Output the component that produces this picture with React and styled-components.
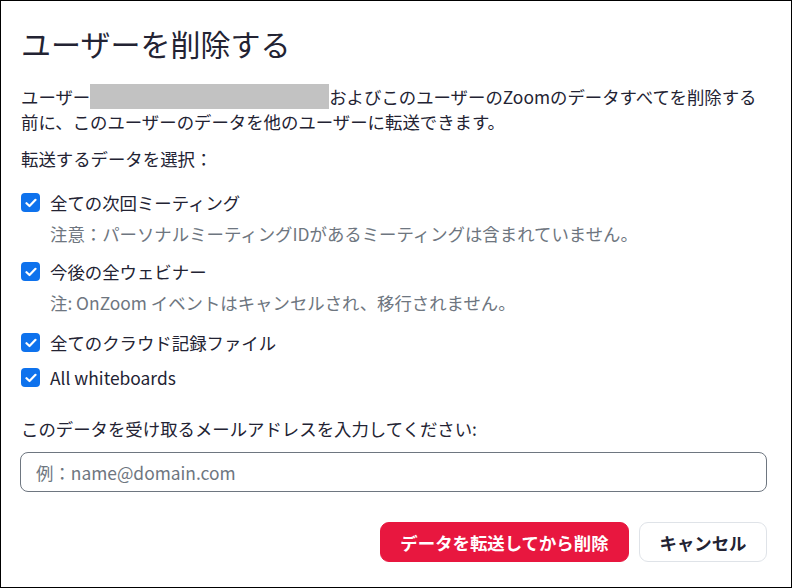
import React from "react";
import styled, { createGlobalStyle } from "styled-components";

const Global = createGlobalStyle`
  html, body { margin: 0; padding: 0; background: #fff; }
  body { font-family: "Noto Sans CJK JP", "Noto Sans", sans-serif; }
  * { box-sizing: border-box; }
`;

const Dialog = styled.div`
  width: 792px;
  height: 588px;
  border: 1px solid #000;
  background: #fff;
  padding: 22px 24px 0 20px;
  display: flex;
  flex-direction: column;
  color: #232333;
  font-size: 17.4px;
  line-height: 25px;
`;

const Title = styled.h1`
  margin: 0 0 21px;
  font-size: 30px;
  line-height: 40px;
  font-weight: 400;
  color: #232333;
`;

const Paragraph = styled.p`
  margin: 0;
  max-width: 745px;
`;

const Redacted = styled.span`
  display: inline-block;
  width: 239px;
  height: 25px;
  background: #c2c2c2;
  vertical-align: top;
`;

const SectionLabel = styled.div`
  margin-top: ${(p) => p.$top}px;
`;

const Option = styled.div`
  margin-top: ${(p) => p.$top}px;
  display: grid;
  grid-template-columns: 19px 1fr;
  column-gap: 10px;
  align-items: center;
`;

const Box = styled.span`
  width: 19px;
  height: 19px;
  border-radius: 4px;
  background: #0e72ed;
  display: flex;
  align-items: center;
  justify-content: center;
`;

const Note = styled.div`
  grid-column: 2;
  margin-top: 6px;
  color: #6e7680;
`;

const Input = styled.input`
  margin: 11px 0 0 -1px;
  width: calc(100% + 1px);
  height: 40px;
  border: 1px solid #6e7680;
  border-radius: 8px;
  padding: 0 15px;
  font: inherit;
  font-size: 17.4px;
  color: #232333;
  outline: none;
  &::placeholder { color: #6e7680; }
`;

const Actions = styled.div`
  margin-top: 30px;
  display: flex;
  justify-content: flex-end;
  gap: 10px;
`;

const Button = styled.button`
  height: 40px;
  padding: 0 19.5px;
  border-radius: 9px;
  border: 1px solid ${(p) => (p.$danger ? "#e8173f" : "#dfe3e8")};
  background: ${(p) => (p.$danger ? "#e8173f" : "#fff")};
  color: ${(p) => (p.$danger ? "#fff" : "#232333")};
  font-family: inherit;
  font-size: 17.4px;
  font-weight: 700;
  cursor: pointer;
`;

const Check = () => (
  <Box>
    <svg width="12" height="10" viewBox="0 0 12 10" fill="none">
      <path d="M1.5 5.2 L4.5 8 L10.5 1.8" stroke="#fff" strokeWidth="2.2" strokeLinecap="round" strokeLinejoin="round" />
    </svg>
  </Box>
);

const options = [
  { label: "全ての次回ミーティング", note: "注意：パーソナルミーティングIDがあるミーティングは含まれていません。", top: 19 },
  { label: "今後の全ウェビナー", note: "注: OnZoom イベントはキャンセルされ、移行されません。", top: 13 },
  { label: "全てのクラウド記録ファイル", top: 15 },
  { label: "All whiteboards", top: 10 },
];

export default function App() {
  return (
    <>
      <Global />
      <Dialog>
        <Title>ユーザーを削除する</Title>
        <Paragraph>
          ユーザー<Redacted />およびこのユーザーのZoomのデータすべてを削除する前に、このユーザーのデータを他のユーザーに転送できます。
        </Paragraph>
        <SectionLabel $top={12}>転送するデータを選択：</SectionLabel>
        {options.map((o) => (
          <Option key={o.label} $top={o.top}>
            <Check />
            <span>{o.label}</span>
            {o.note && <Note>{o.note}</Note>}
          </Option>
        ))}
        <SectionLabel $top={26}>このデータを受け取るメールアドレスを入力してください:</SectionLabel>
        <Input placeholder="例：name@domain.com" />
        <Actions>
          <Button $danger>データを転送してから削除</Button>
          <Button>キャンセル</Button>
        </Actions>
      </Dialog>
    </>
  );
}
